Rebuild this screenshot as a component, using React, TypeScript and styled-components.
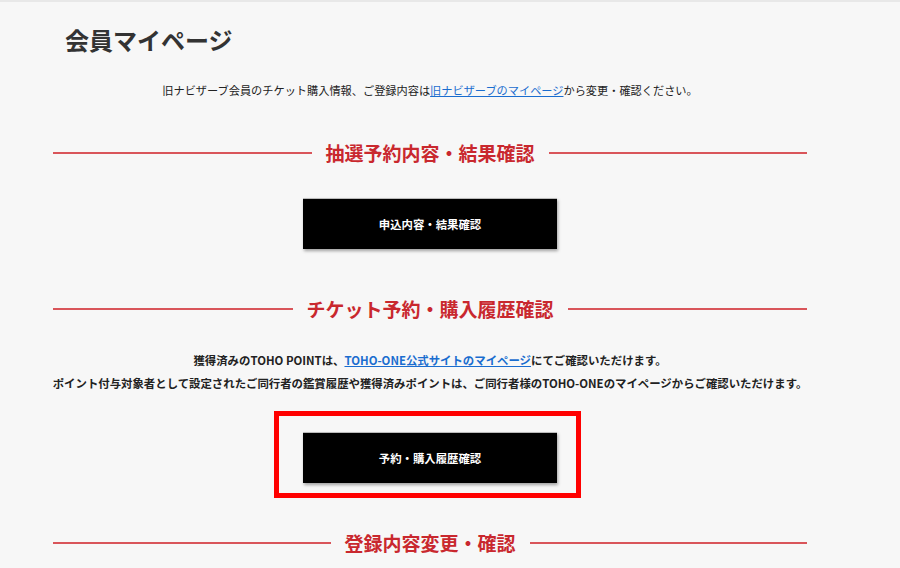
import React from 'react';
import styled, { createGlobalStyle } from 'styled-components';

const GlobalStyle = createGlobalStyle`
  body {
    margin: 0;
    background: #f7f7f7;
    font-family: "Noto Sans CJK JP", "Noto Sans", sans-serif;
    color: #222;
  }
`;

const Page = styled.div`
  min-height: 566px;
  border-top: 2px solid #e8e8e8;
  background: #f7f7f7;
`;

const Title = styled.h1`
  margin: 22px 0 0;
  padding-left: 65px;
  font-size: 24px;
  line-height: 32px;
  font-weight: 700;
  color: #333;
`;

const Content = styled.div`
  margin-left: 53px;
  width: 754px;
  display: flex;
  flex-direction: column;
  align-items: center;
`;

const Intro = styled.p`
  margin: 24px 0 0;
  font-size: 11.2px;
  line-height: 20px;
  text-align: center;
`;

const Link = styled.a`
  color: #1a6dcf;
  text-decoration: underline;
`;

const SectionHead = styled.div<{ $top: number }>`
  margin-top: ${(p) => p.$top}px;
  width: 100%;
  display: flex;
  align-items: center;
  gap: 14px;

  &::before,
  &::after {
    content: '';
    flex: 1;
    height: 2px;
    background: #d9555a;
  }
`;

const SectionTitle = styled.h2`
  margin: 0;
  font-size: 19px;
  line-height: 28px;
  font-weight: 700;
  color: #c9282e;
  white-space: nowrap;
`;

const BlackButton = styled.a<{ $top?: number }>`
  margin-top: ${(p) => p.$top ?? 0}px;
  width: 254px;
  height: 50px;
  display: flex;
  align-items: center;
  justify-content: center;
  background: #000;
  color: #fff;
  font-size: 11.4px;
  font-weight: 700;
  text-decoration: none;
  border-top: 1px solid #bbb;
  box-shadow: 1px 2px 3px rgba(0, 0, 0, 0.35);
`;

const Notes = styled.p`
  margin: 26px 0 0;
  font-size: 11.4px;
  line-height: 23px;
  font-weight: 700;
  text-align: center;
  white-space: nowrap;
`;

const Highlight = styled.div`
  margin: 16px 5px 0 0;
  border: 5px solid #ff0000;
  padding: 16px 19px 10px 24px;
`;

export default function App() {
  return (
    <>
      <GlobalStyle />
      <Page>
        <Title>会員マイページ</Title>
        <Content>
          <Intro>
            旧ナビザーブ会員のチケット購入情報、ご登録内容は
            <Link href="#">旧ナビザーブのマイページ</Link>
            から変更・確認ください。
          </Intro>

          <SectionHead $top={39}>
            <SectionTitle>抽選予約内容・結果確認</SectionTitle>
          </SectionHead>
          <BlackButton $top={31} href="#">申込内容・結果確認</BlackButton>

          <SectionHead $top={46}>
            <SectionTitle>チケット予約・購入履歴確認</SectionTitle>
          </SectionHead>
          <Notes>
            獲得済みのTOHO POINTは、<Link href="#">TOHO-ONE公式サイトのマイページ</Link>にてご確認いただけます。
            <br />
            ポイント付与対象者として設定されたご同行者の鑑賞履歴や獲得済みポイントは、ご同行者様のTOHO-ONEのマイページからご確認いただけます。
          </Notes>
          <Highlight>
            <BlackButton href="#">予約・購入履歴確認</BlackButton>
          </Highlight>

          <SectionHead $top={31}>
            <SectionTitle>登録内容変更・確認</SectionTitle>
          </SectionHead>
        </Content>
      </Page>
    </>
  );
}
